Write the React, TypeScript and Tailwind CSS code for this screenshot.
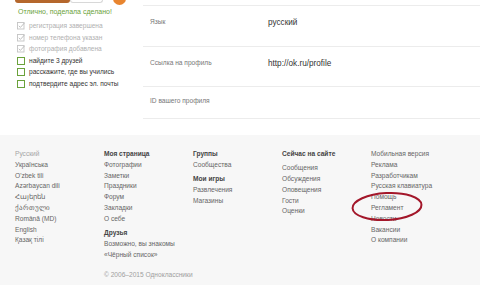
import React from "react";

const FONT = { fontFamily: '"Liberation Sans", Arial, sans-serif' };

const CHECKS: { label: string; done: boolean }[] = [
  { label: "регистрация завершена", done: true },
  { label: "номер телефона указан", done: true },
  { label: "фотография добавлена", done: true },
  { label: "найдите 3 друзей", done: false },
  { label: "расскажите, где вы учились", done: false },
  { label: "подтвердите адрес эл. почты", done: false },
];

const ROWS: { label: string; value: string; h: string; pt: string }[] = [
  { label: "Язык", value: "русский", h: "h-[41px]", pt: "pt-[12px]" },
  { label: "Ссылка на профиль", value: "http://ok.ru/profile", h: "h-[40px]", pt: "pt-[12px]" },
  { label: "ID вашего профиля", value: "", h: "h-[32px]", pt: "pt-[10px]" },
];

function CheckIcon({ done }: { done: boolean }) {
  if (done) {
    return (
      <svg width="8" height="8" viewBox="0 0 8 8" className="shrink-0">
        <rect x="0.5" y="0.5" width="6.5" height="6.5" fill="none" stroke="#c4c4c4" strokeWidth="0.9" />
        <path d="M1.8 3.8 L3.4 5.4 L7.6 0.8" fill="none" stroke="#b8b8b8" strokeWidth="0.9" />
      </svg>
    );
  }
  return <span className="block w-[8px] h-[8px] border-[1.5px] border-[#6aa23a] shrink-0" />;
}

type Item = { t: string; bold?: boolean; light?: boolean; gap?: boolean };

const COLS: Item[][] = [
  [
    { t: "Русский", light: true },
    { t: "Українська" },
    { t: "O'zbek tili" },
    { t: "Azərbaycan dili" },
    { t: "Հայերեն" },
    { t: "ქართული" },
    { t: "Română (MD)" },
    { t: "English" },
    { t: "Қазақ тілі" },
  ],
  [
    { t: "Моя страница", bold: true },
    { t: "Фотографии" },
    { t: "Заметки" },
    { t: "Праздники" },
    { t: "Форум" },
    { t: "Закладки" },
    { t: "О себе" },
    { t: "Друзья", bold: true, gap: true },
    { t: "Возможно, вы знакомы" },
    { t: "«Чёрный список»" },
  ],
  [
    { t: "Группы", bold: true },
    { t: "Сообщества" },
    { t: "Мои игры", bold: true, gap: true },
    { t: "Развлечения" },
    { t: "Магазины" },
  ],
  [
    { t: "Сейчас на сайте", bold: true },
    { t: "Сообщения", gap: true },
    { t: "Обсуждения" },
    { t: "Оповещения" },
    { t: "Гости" },
    { t: "Оценки" },
  ],
  [
    { t: "Мобильная версия" },
    { t: "Реклама" },
    { t: "Разработчикам" },
    { t: "Русская клавиатура" },
    { t: "Помощь" },
    { t: "Регламент" },
    { t: "Новости" },
    { t: "Вакансии" },
    { t: "О компании" },
  ],
];

export default function App() {
  return (
    <div className="w-[480px] h-[285px] overflow-hidden bg-white relative" style={FONT}>
      {/* Top — progress list + profile rows */}
      <div className="flex h-[135px]">
        <div className="w-[143px] shrink-0 pl-[15px]">
          {/* cut-off buttons */}
          <div className="flex items-start h-[4px] overflow-visible">
            <div className="w-[55px] h-[3px] rounded-b-[3px] bg-[#b5672c]" />
            <div className="w-[33px] h-[3px] rounded-b-[3px] border border-t-0 border-[#d8d8d8] bg-white" />
            <div className="ml-[10px] w-[13px] h-[13px] -mt-[8px] rounded-full bg-[#e8852f]" />
          </div>
          <div className="mt-[3px] pl-[3px] text-[7px] leading-[9px] text-[#6aa23a]">Отлично, поделала сделано!</div>
          <div className="mt-[6px] flex flex-col gap-[3.6px] pl-[2px]">
            {CHECKS.map((c) => (
              <div key={c.label} className="flex items-center gap-[4px] h-[8px]">
                <CheckIcon done={c.done} />
                <span className={`text-[6.6px] leading-[8px] ${c.done ? "text-[#b0b0b0]" : "text-[#333]"}`}>
                  {c.label}
                </span>
              </div>
            ))}
          </div>
        </div>

        <div className="flex-1 pt-[5px]">
          <div className="border-t border-[#ececec]">
            {ROWS.map((r) => (
              <div key={r.label} className={`flex items-start border-b border-[#ececec] ${r.h}`}>
                <span className={`w-[125px] pl-[7px] ${r.pt} text-[6.6px] leading-[8px] text-[#777]`}>{r.label}</span>
                <span className={`${r.pt} text-[8.2px] leading-[9px] text-[#333]`}>{r.value}</span>
              </div>
            ))}
          </div>
        </div>
      </div>

      {/* Footer */}
      <div className="bg-[#f7f7f7] h-[150px] pl-[15px] pt-[14px]">
        <div className="grid grid-cols-[89px_89px_89px_89px_1fr]">
          {COLS.map((col, i) => (
            <div key={i} className="flex flex-col">
              {col.map((it) => (
                <span
                  key={it.t}
                  className={`text-[6.6px] leading-[10.8px] whitespace-nowrap ${it.gap ? "mt-[3.5px]" : ""} ${
                    it.bold ? "font-bold text-[#444]" : it.light ? "text-[#a5a5a5]" : "text-[#666]"
                  }`}
                >
                  {it.t}
                </span>
              ))}
              {i === 1 && (
                <span className="mt-[10px] text-[6.6px] leading-[10px] text-[#a0a0a0] whitespace-nowrap">
                  © 2006–2015 Одноклассники
                </span>
              )}
            </div>
          ))}
        </div>
      </div>

      {/* red marker ellipse */}
      <svg className="absolute left-[348px] top-[189px]" width="80" height="36" viewBox="0 0 80 36">
        <ellipse cx="39" cy="17.5" rx="34.5" ry="13.5" fill="none" stroke="#a3172a" strokeWidth="2" transform="rotate(-3 39 17.5)" />
      </svg>
    </div>
  );
}
